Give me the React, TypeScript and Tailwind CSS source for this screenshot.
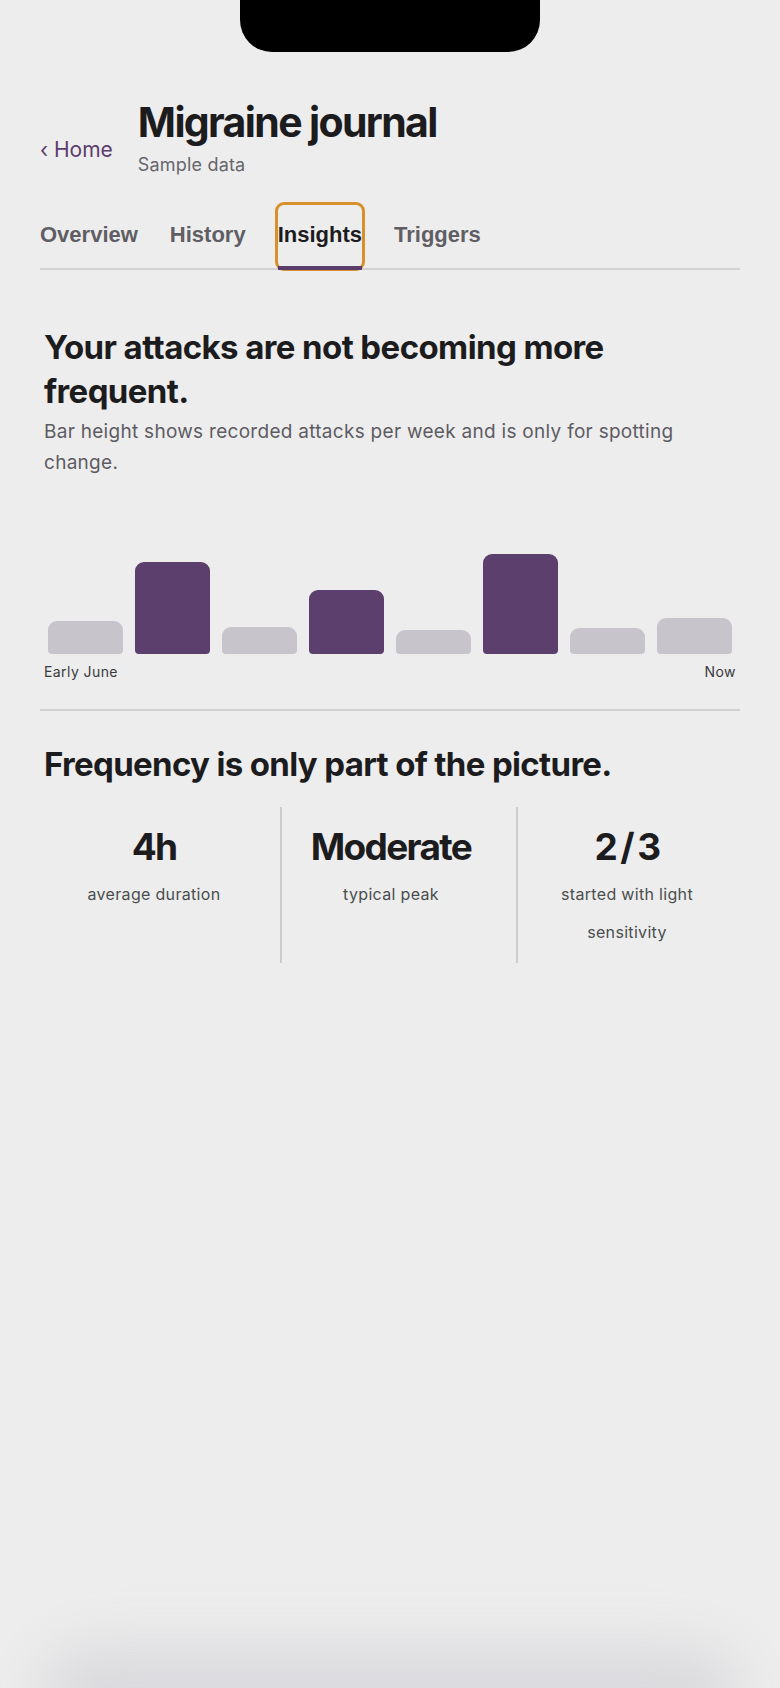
import React from "react";

const bars = [
  { h: 33, dark: false },
  { h: 92, dark: true },
  { h: 27, dark: false },
  { h: 64, dark: true },
  { h: 24, dark: false },
  { h: 100, dark: true },
  { h: 26, dark: false },
  { h: 36, dark: false },
];

const inter = { fontFamily: "Inter, 'Noto Sans', sans-serif" };

export default function App() {
  return (
    <div
      className="relative min-h-[1688px] w-full overflow-hidden bg-[#ededed] text-[#1d1d1f]"
      style={inter}
    >
      {/* notch */}
      <div className="mx-auto h-[52px] w-[300px] rounded-b-[32px] bg-black" />

      <div className="px-[40px]">
        {/* header */}
        <div className="mt-[46px] flex items-start gap-[25px]">
          <a className="mt-[36px] text-[21px] leading-[1.5] text-[#5b3d6c]">‹ Home</a>
          <div className="flex flex-col">
            <h1 className="text-[41px] font-bold leading-[1.2] tracking-[-0.04em] text-[#1c1c1e]">
              Migraine journal
            </h1>
            <p className="mt-[4px] text-[18px] leading-[1.5] tracking-[0.01em] text-[#67666c]">
              Sample data
            </p>
          </div>
        </div>

        {/* tabs */}
        <div
          className="mt-[27px] flex gap-[32px] border-b-2 border-[#d2d2d2]"
          style={{ fontFamily: "'Liberation Sans', Arial, sans-serif" }}
        >
          <button className="pt-[13px] pb-[17px] text-[22px] font-bold leading-[1.5] text-[#5f5e64]">
            Overview
          </button>
          <button className="pt-[13px] pb-[17px] text-[22px] font-bold leading-[1.5] text-[#5f5e64]">
            History
          </button>
          <button className="relative rounded-[6px] pt-[13px] pb-[17px] text-[22px] font-bold leading-[1.5] text-[#1c1c1e] outline-[3px] outline-[#d6912b] outline-solid">
            Insights
            <span className="absolute bottom-[-2px] left-0 right-0 h-[4px] bg-[#5b3d6c]" />
          </button>
          <button className="pt-[13px] pb-[17px] text-[22px] font-bold leading-[1.5] text-[#5f5e64]">
            Triggers
          </button>
        </div>

        {/* insight */}
        <div className="px-[4px]">
          <h2 className="mt-[55px] text-[33px] font-bold leading-[44px] tracking-[-0.018em] text-[#1c1c1e]">
            Your attacks are not becoming more frequent.
          </h2>
          <p className="mt-[3px] pr-[30px] text-[19px] leading-[31px] tracking-[0.015em] text-[#5d5c63]">
            Bar height shows recorded attacks per week and is only for spotting change.
          </p>

          <div className="mt-[56px] flex h-[120px] items-end gap-[12px] px-[4px]">
            {bars.map((b, i) => (
              <div
                key={i}
                className={
                  b.dark
                    ? "flex-1 rounded-t-[9px] rounded-b-[4px] bg-[#5c3f6c]"
                    : "flex-1 rounded-t-[9px] rounded-b-[4px] bg-[#c8c4cb]"
                }
                style={{ height: `${b.h}px` }}
              />
            ))}
          </div>
          <div className="mt-[7px] flex justify-between text-[14px] leading-[21px] tracking-[0.03em] text-[#3a3a3c]">
            <span>Early June</span>
            <span>Now</span>
          </div>
        </div>

        <div className="mt-[27px] h-[2px] bg-[#d0d0d0]" />

        <div className="px-[4px]">
          <h2 className="mt-[31px] text-[33px] font-bold leading-[44px] tracking-[-0.02em] text-[#1c1c1e]">
            Frequency is only part of the picture.
          </h2>

          <div className="mt-[21px] grid grid-cols-3 gap-x-[16px]">
            <Stat value="4h" label="average duration" />
            <Stat value="Moderate" label="typical peak" border />
            <Stat value={"2\u2009/\u20093"} label="started with light sensitivity" border />
          </div>
        </div>
      </div>

      {/* bottom shadow */}
      <div className="pointer-events-none absolute bottom-[-50px] left-[40px] right-[40px] h-[90px] rounded-full bg-[#d4d4d8] opacity-80 blur-[30px]" />
    </div>
  );
}

function Stat({ value, label, border }: { value: string; label: string; border?: boolean }) {
  return (
    <div
      className={
        border
          ? "flex flex-col items-center border-l-2 border-[#cdcdcd] px-[20px] pt-[18px] pb-[12px] text-center"
          : "flex flex-col items-center px-[20px] pt-[18px] pb-[12px] text-center"
      }
    >
      <div className="text-[37px] font-bold leading-[1.2] tracking-[-0.045em] text-[#1c1c1e]">{value}</div>
      <div className="mt-[5px] text-[16px] leading-[38px] tracking-[0.02em] text-[#4a4e4e]">{label}</div>
    </div>
  );
}
